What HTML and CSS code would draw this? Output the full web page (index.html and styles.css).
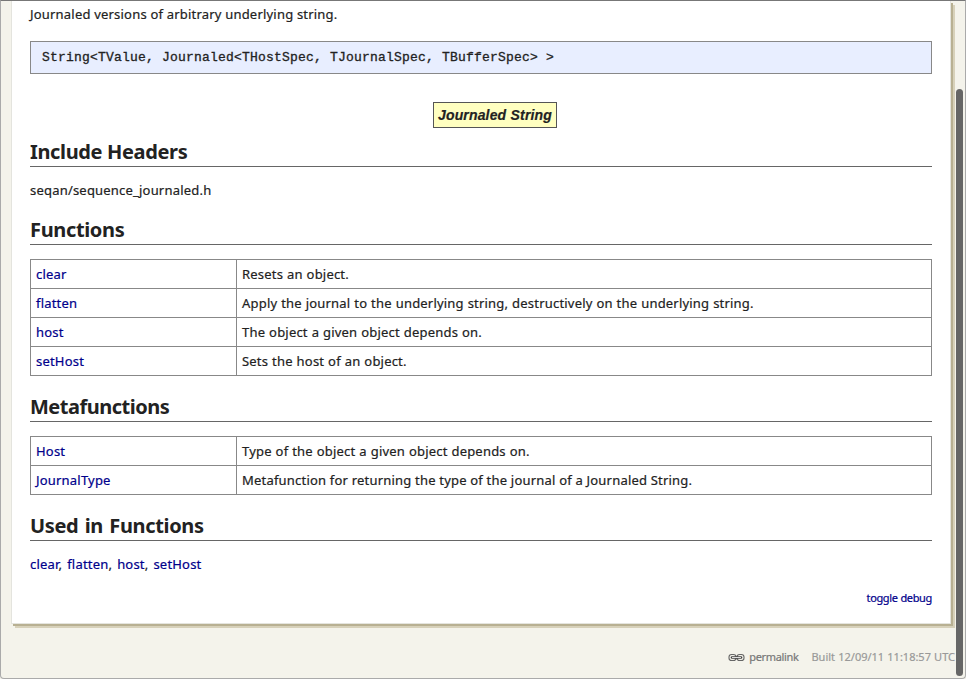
FILE: index.html
```
<!DOCTYPE html>
<html lang="en">
<head>
<meta charset="utf-8">
<title>Journaled String</title>
<link rel="stylesheet" href="styles.css">
</head>
<body>
<div class="window">
  <main class="page">
    <p class="summary">Journaled versions of arbitrary underlying string.</p>
    <pre class="signature">String&lt;TValue, Journaled&lt;THostSpec, TJournalSpec, TBufferSpec&gt; &gt;</pre>
    <div class="diagram"><span class="node">Journaled String</span></div>
    <h2 class="include">Include Headers</h2>
    <p class="text">seqan/sequence_journaled.h</p>
    <h2>Functions</h2>
    <table>
      <tr><td class="name"><a href="#">clear</a></td><td>Resets an object.</td></tr>
      <tr><td class="name"><a href="#">flatten</a></td><td>Apply the journal to the underlying string, destructively on the underlying string.</td></tr>
      <tr><td class="name"><a href="#">host</a></td><td>The object a given object depends on.</td></tr>
      <tr><td class="name"><a href="#">setHost</a></td><td>Sets the host of an object.</td></tr>
    </table>
    <h2 class="meta">Metafunctions</h2>
    <table>
      <tr><td class="name"><a href="#">Host</a></td><td>Type of the object a given object depends on.</td></tr>
      <tr><td class="name"><a href="#">JournalType</a></td><td class="tight">Metafunction for returning the type of the journal of a Journaled String.</td></tr>
    </table>
    <h2>Used in Functions</h2>
    <p class="text used"><a href="#">clear</a>, <a href="#">flatten</a>, <a href="#">host</a>, <a href="#">setHost</a></p>
    <p class="debug"><a href="#">toggle debug</a></p>
  </main>
  <footer>
    <svg class="chain" width="17" height="9" viewBox="0 0 17 9" fill="none">
      <rect x="1" y="1.5" width="7" height="6" rx="2.6" stroke="#666" stroke-width="1.1"/>
      <rect x="9" y="1.5" width="7" height="6" rx="2.6" stroke="#666" stroke-width="1.1"/>
      <path d="M4 4.5H13" stroke="#444" stroke-width="2.6" stroke-linecap="round"/>
      <path d="M4 4.5H13" stroke="#ddd" stroke-width="1"/>
    </svg>
    <a class="permalink" href="#">permalink</a>
    <span class="built">Built 12/09/11 11:18:57 UTC</span>
  </footer>
  <div class="scrollbar"></div>
</div>
</body>
</html>
```
FILE: styles.css
```
* { box-sizing: border-box; }
body {
  margin: 0;
  background: #f4f3eb;
  font: 13px/18px "Noto Sans", sans-serif;
  letter-spacing: 0.2px;
  word-spacing: 0.3px;
  color: #222;
  -webkit-text-stroke: 0.2px;
}
.window {
  position: relative;
  width: 966px;
  height: 679px;
  overflow: hidden;
  background: #f4f3eb;
  border: 1px solid #aaa;
  border-top-color: #777;
  border-radius: 0 0 4px 4px;
  padding-left: 10px;
}
.page {
  width: 940px;
  height: 623px;
  padding: 4px 18px 0;
  background: #fff;
  border: 1px solid #e4e4de;
  border-top: 0;
  box-shadow: 2px 2px 0 #b8b092, 4px 4px 0 #d7d1ba;
}
p { margin: 0; }
a { color: #00008b; text-decoration: none; }
.summary { height: 36px; word-spacing: 0; }
.signature {
  margin: 0;
  height: 33px;
  padding: 0 11px;
  border: 1px solid #888;
  background: #e8eeff;
  font: 13px/31px "Liberation Mono", monospace;
  letter-spacing: 0.2px;
  word-spacing: 0;
  -webkit-text-stroke: 0.3px;
}
.diagram { display: flex; justify-content: center; padding: 28px 0 11px; }
.node {
  width: 124px;
  height: 26px;
  margin-left: 28px;
  border: 1px solid #555;
  background: #ffffc0;
  font: italic bold 14px/24px "Liberation Sans", sans-serif;
  letter-spacing: 0.15px;
  text-align: center;
}
h2 {
  margin: 0;
  height: 28px;
  font: bold 20px/26px "Noto Sans", sans-serif;
  letter-spacing: -0.35px;
  word-spacing: 1.5px;
  border-bottom: 1px solid #666;
  -webkit-text-stroke: 0;
}
.include { word-spacing: 0; }
.meta { letter-spacing: -0.5px; }
.text { padding-top: 14px; height: 50px; }
.used { height: 48px; word-spacing: 1.4px; }
.tight { word-spacing: 0; }
table {
  width: 902px;
  margin: 14px 0 18px;
  border-collapse: collapse;
  table-layout: fixed;
}
td { height: 29px; padding: 0 5px; border: 1px solid #888; }
.name { width: 206px; }
.debug { font-size: 11px; letter-spacing: -0.35px; text-align: right; }
footer {
  display: flex;
  align-items: center;
  justify-content: flex-end;
  height: 18px;
  margin-top: 24px;
  padding-right: 10px;
  font-size: 11px;
  letter-spacing: 0;
}
.permalink { color: #777; margin: 0 13px 0 4px; letter-spacing: -0.35px; }
.built { color: #999; }
.scrollbar {
  position: absolute;
  top: 88px;
  right: 2px;
  width: 7px;
  height: 587px;
  border-radius: 4px;
  background: #666;
}
```
